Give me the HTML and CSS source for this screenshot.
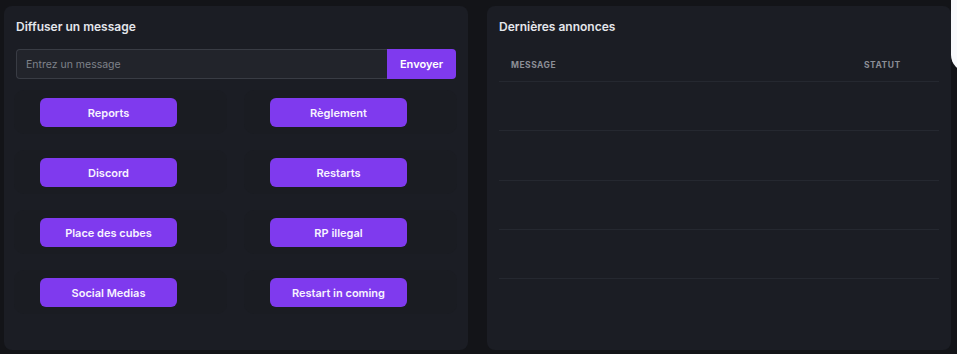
FILE: index.html
```html
<!DOCTYPE html>
<html lang="fr">
<head>
    <meta charset="UTF-8">
    <meta name="viewport" content="width=device-width, initial-scale=1.0">
    <title>Annonces</title>
    <link rel="stylesheet" href="styles.css">
</head>
<body>
    <div class="layout">
        <!-- Diffusion -->
        <section class="card">
            <h2 class="card-title">Diffuser un message</h2>
            <form class="send-form">
                <input class="send-input" type="text" placeholder="Entrez un message">
                <button class="send-btn" type="button">Envoyer</button>
            </form>
            <div class="presets">
                <div class="preset"><button class="preset-btn" type="button">Reports</button></div>
                <div class="preset"><button class="preset-btn" type="button">Règlement</button></div>
                <div class="preset"><button class="preset-btn" type="button">Discord</button></div>
                <div class="preset"><button class="preset-btn" type="button">Restarts</button></div>
                <div class="preset"><button class="preset-btn" type="button">Place des cubes</button></div>
                <div class="preset"><button class="preset-btn" type="button">RP illegal</button></div>
                <div class="preset"><button class="preset-btn" type="button">Social Medias</button></div>
                <div class="preset"><button class="preset-btn" type="button">Restart in coming</button></div>
            </div>
        </section>

        <!-- Historique -->
        <section class="card">
            <h2 class="card-title">Dernières annonces</h2>
            <div class="table">
                <div class="table-row table-head">
                    <span>Message</span>
                    <span>Statut</span>
                </div>
                <div class="table-row"></div>
                <div class="table-row"></div>
                <div class="table-row"></div>
                <div class="table-row"></div>
            </div>
        </section>
    </div>

    <div class="toast"></div>
</body>
</html>
```

FILE: styles.css
```css
/* Base */
body {
    margin: 0;
    padding: 6px 0 0 4px;
    background-color: #131418;
    font-family: 'Inter', 'Liberation Sans', sans-serif;
    color: #e4e6eb;
    overflow: hidden;
}

.layout {
    display: grid;
    grid-template-columns: 464px 464px;
    gap: 19px;
}

/* Cartes */
.card {
    background-color: #1b1d24;
    border-radius: 8px;
    height: 344px;
    padding: 12px;
    box-sizing: border-box;
}
.card-title {
    margin: 0 0 13px;
    font-size: 12px;
    line-height: 18px;
    font-weight: 600;
    color: #e4e6eb;
}

/* Formulaire */
.send-form {
    display: flex;
    height: 30px;
    margin: 0;
}
.send-input {
    flex: 1;
    min-width: 0;
    margin: 0;
    padding: 0 9px;
    background-color: #22242b;
    border: 1px solid #393c44;
    border-right: none;
    border-radius: 4px 0 0 4px;
    font-family: inherit;
    font-size: 10.5px;
    color: #e4e6eb;
    outline: none;
}
.send-input::placeholder {
    color: #7f828a;
}
.send-btn {
    width: 69px;
    margin: 0;
    border: none;
    border-radius: 0 4px 4px 0;
    background-color: #7f3aee;
    color: #ffffff;
    font-family: inherit;
    font-size: 11px;
    font-weight: 600;
}

/* Messages prédéfinis */
.presets {
    display: grid;
    grid-template-columns: 213px 213px;
    grid-auto-rows: 44px;
    column-gap: 17px;
    row-gap: 16px;
    margin: 11px 0 0 -2px;
}
.preset {
    background-color: #1a1c22;
    border-radius: 10px;
    padding: 8px 0 0 26px;
}
.preset-btn {
    display: block;
    width: 137px;
    height: 29px;
    margin: 0;
    border: none;
    border-radius: 6px;
    background-color: #7f3aee;
    color: #f7f3ff;
    font-family: inherit;
    font-size: 11px;
    font-weight: 600;
}

/* Tableau */
.table {
    display: flex;
    flex-direction: column;
}
.table-row {
    display: grid;
    grid-template-columns: 1fr 87px;
    height: 48.25px;
    border-bottom: 1px solid #252830;
}
.table-head {
    height: 32px;
    align-items: center;
    font-size: 8.5px;
    font-weight: 700;
    letter-spacing: 0.5px;
    text-transform: uppercase;
    color: #8b8e96;
}
.table-head span {
    padding-left: 12px;
}

/* Notification (coupée au bord) */
.toast {
    position: fixed;
    top: 0;
    left: 951px;
    width: 60px;
    height: 72px;
    background-color: #f8f9fc;
    border-bottom-left-radius: 17px;
}
```
